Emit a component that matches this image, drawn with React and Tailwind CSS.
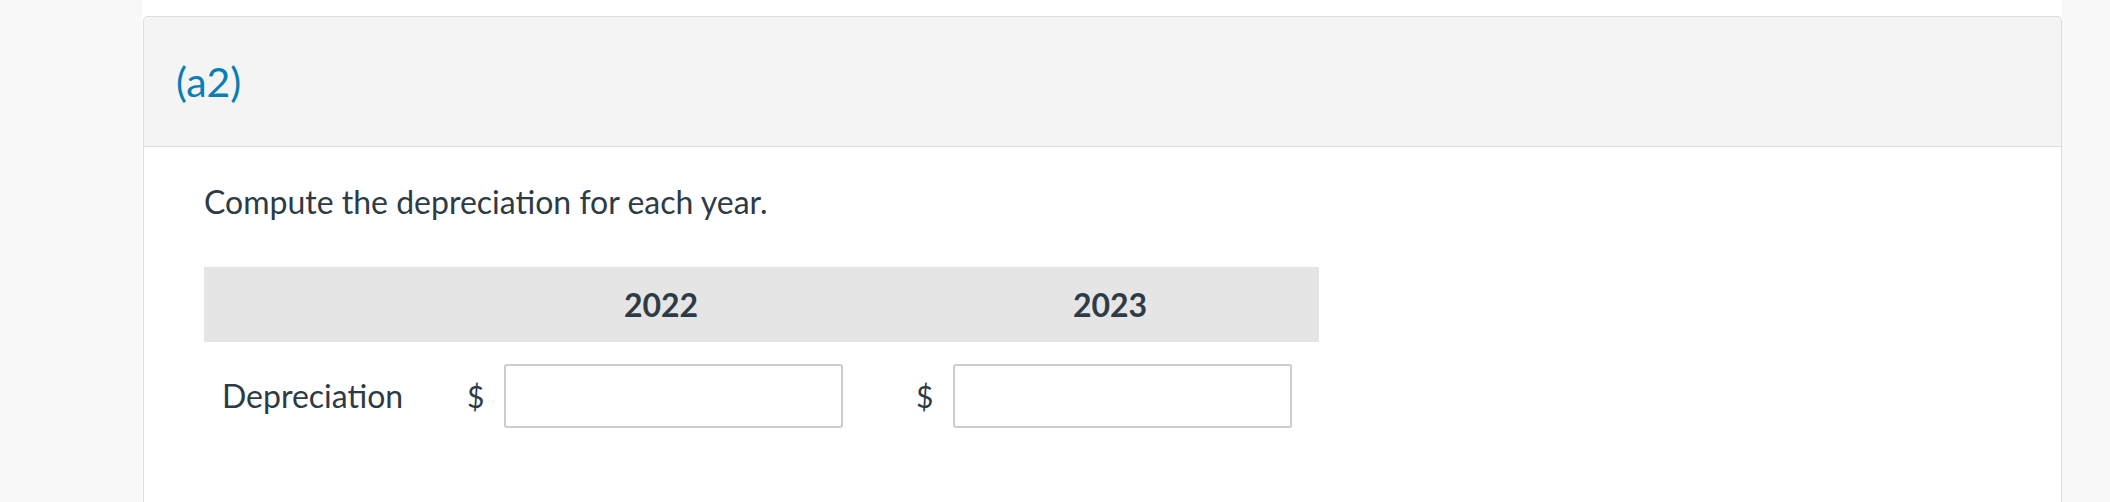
import React from 'react'

function MoneyCell(){
  return (
    <div className="w-[418px] flex items-center pl-[15px]">
      <span className="w-[37px] text-[30px] leading-none">$</span>
      <input type="text" className="w-[339px] h-[64px] border-2 border-[#cccccc] rounded-[3px] bg-white outline-none" />
    </div>
  )
}

export default function App(){
  return (
    <div className="flex w-[2110px] h-[502px] overflow-hidden text-[#2d3b45]" style={{ fontFamily: 'Lato, "Open Sans", sans-serif' }}>
      <div className="w-[142px] bg-[#f8f8f8]" />
      <div className="w-[1920px] bg-white pt-[16px] pl-px">
        <div className="h-full border border-b-0 border-[#dcdcdc] rounded-t-[5px] overflow-hidden">
          <div className="h-[130px] bg-[#f4f4f4] border-b border-[#dcdcdc] flex items-center pl-[32px]">
            <h2 className="text-[41px] text-[#0a7db3] font-normal">(a2)</h2>
          </div>
          <div className="pl-[60px] pt-[36px]">
            <p className="text-[32px] leading-[38px]">Compute the depreciation for each year.</p>

            <div className="mt-[46px] w-[1115px]">
              <div className="flex h-[75px] bg-[#e5e5e5] items-center font-bold text-[32px]">
                <div className="w-[248px]" />
                <div className="w-[418px] text-center">2022</div>
                <div className="w-[31px]" />
                <div className="w-[418px] text-center">2023</div>
              </div>
              <div className="flex items-center mt-[22px]">
                <div className="w-[248px] pl-[18px] text-[32px]">Depreciation</div>
                <MoneyCell />
                <div className="w-[31px]" />
                <MoneyCell />
              </div>
            </div>
          </div>
        </div>
      </div>
      <div className="flex-1 bg-[#f8f8f8]" />
    </div>
  )
}
